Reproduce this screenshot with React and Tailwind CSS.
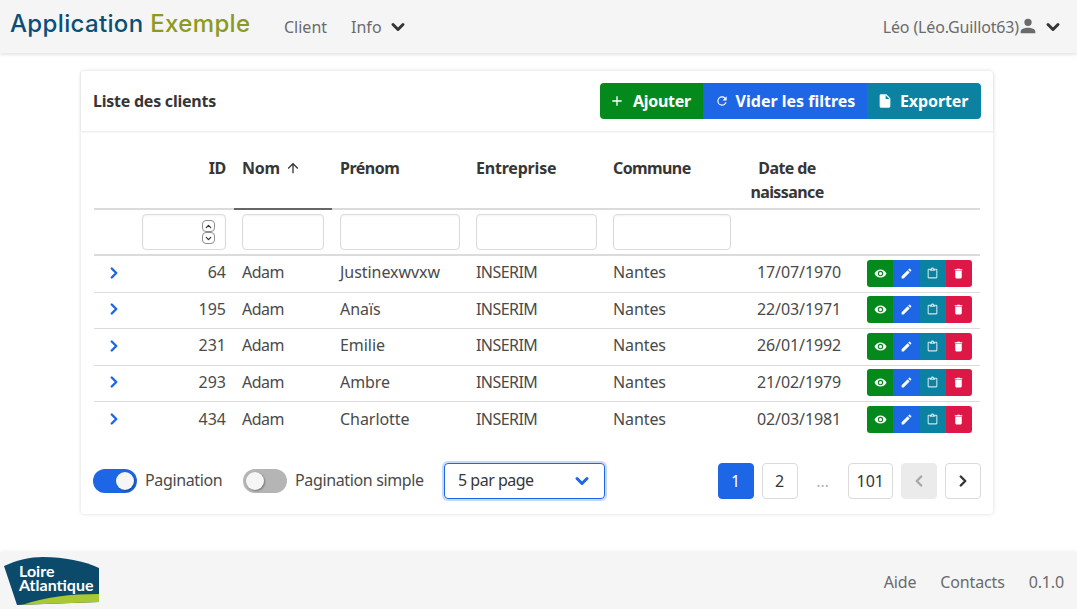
import React from 'react'

const P = {
  eye: 'M12,9A3,3 0 0,0 9,12A3,3 0 0,0 12,15A3,3 0 0,0 15,12A3,3 0 0,0 12,9M12,17A5,5 0 0,1 7,12A5,5 0 0,1 12,7A5,5 0 0,1 17,12A5,5 0 0,1 12,17M12,4.5C7,4.5 2.73,7.61 1,12C2.73,16.39 7,19.5 12,19.5C17,19.5 21.27,16.39 23,12C21.27,7.61 17,4.5 12,4.5Z',
  pencil: 'M20.71,7.04C21.1,6.65 21.1,6 20.71,5.63L18.37,3.29C18,2.9 17.35,2.9 16.96,3.29L15.12,5.12L18.87,8.87M3,17.25V21H6.75L17.81,9.93L14.06,6.18L3,17.25Z',
  clipboard: 'M19,3H14.82C14.4,1.84 13.3,1 12,1C10.7,1 9.6,1.84 9.18,3H5A2,2 0 0,0 3,5V19A2,2 0 0,0 5,21H19A2,2 0 0,0 21,19V5A2,2 0 0,0 19,3M12,3A1,1 0 0,1 13,4A1,1 0 0,1 12,5A1,1 0 0,1 11,4A1,1 0 0,1 12,3M7,7H17V5H19V19H5V5H7V7Z',
  trash: 'M19,4H15.5L14.5,3H9.5L8.5,4H5V6H19M6,19A2,2 0 0,0 8,21H16A2,2 0 0,0 18,19V7H6V19Z',
  file: 'M13,9V3.5L18.5,9M6,2C4.89,2 4,2.89 4,4V20A2,2 0 0,0 6,22H18A2,2 0 0,0 20,20V8L14,2H6Z',
  refresh: 'M17.65,6.35C16.2,4.9 14.21,4 12,4A8,8 0 0,0 4,12A8,8 0 0,0 12,20C15.73,20 18.84,17.45 19.73,14H17.65C16.83,16.33 14.61,18 12,18A6,6 0 0,1 6,12A6,6 0 0,1 12,6C13.66,6 15.14,6.69 16.22,7.78L13,11H20V4L17.65,6.35Z',
  account: 'M12,4A4,4 0 0,1 16,8A4,4 0 0,1 12,12A4,4 0 0,1 8,8A4,4 0 0,1 12,4M12,14C16.42,14 20,15.79 20,18V20H4V18C4,15.79 7.58,14 12,14Z',
  plus: 'M19,13H13V19H11V13H5V11H11V5H13V11H19V13Z',
  arrowUp: 'M13,20H11V8L5.5,13.5L4.08,12.08L12,4.16L19.92,12.08L18.5,13.5L13,8V20Z',
}

function Icon({ d, className }) {
  return (
    <svg viewBox="0 0 24 24" className={className} fill="currentColor">
      <path d={d} />
    </svg>
  )
}

function Chevron({ dir = 'down', className, width = 3.2 }) {
  const points = {
    down: '6,9 12,15 18,9',
    up: '6,15 12,9 18,15',
    right: '9,6 15,12 9,18',
    left: '15,6 9,12 15,18',
  }[dir]
  return (
    <svg viewBox="0 0 24 24" className={className} fill="none" stroke="currentColor" strokeWidth={width} strokeLinecap="round" strokeLinejoin="round">
      <polyline points={points} />
    </svg>
  )
}

const clients = [
  { id: 64, nom: 'Adam', prenom: 'Justinexwvxw', date: '17/07/1970' },
  { id: 195, nom: 'Adam', prenom: 'Anaïs', date: '22/03/1971' },
  { id: 231, nom: 'Adam', prenom: 'Emilie', date: '26/01/1992' },
  { id: 293, nom: 'Adam', prenom: 'Ambre', date: '21/02/1979' },
  { id: 434, nom: 'Adam', prenom: 'Charlotte', date: '02/03/1981' },
]

function ActionButtons() {
  const btn = 'w-[26.25px] h-[27px] flex items-center justify-center text-white'
  return (
    <div className="flex -mt-px">
      <span className={`${btn} bg-[#048a1c] rounded-l-[3px]`}><Icon d={P.eye} className="w-[13px] h-[13px]" /></span>
      <span className={`${btn} bg-[#1d66e5]`}><Icon d={P.pencil} className="w-[13px] h-[13px]" /></span>
      <span className={`${btn} bg-[#0b82a1]`}><Icon d={P.clipboard} className="w-[13px] h-[13px] opacity-80" /></span>
      <span className={`${btn} bg-[#de1846] rounded-r-[3px]`}><Icon d={P.trash} className="w-[13px] h-[13px]" /></span>
    </div>
  )
}

function Toggle({ on, label, labelClass }) {
  return (
    <div className="flex items-center gap-2">
      <span className={`w-11 h-6 rounded-full flex items-center px-[3px] ${on ? 'bg-[#1d66e5] justify-end' : 'bg-[#b5b5b5] justify-start'}`}>
        <span className="w-[18px] h-[18px] rounded-full bg-[#f5f5f5] shadow-[1px_1px_2px_rgba(0,0,0,0.35)]" />
      </span>
      <span className={`text-[#4a4a4a] whitespace-nowrap -mt-[2px] tracking-[-0.36px] ${labelClass}`}>{label}</span>
    </div>
  )
}

function PageBtn({ children, active, disabled }) {
  let cls = 'bg-white border-[#dbdbdb] text-[#363636]'
  if (active) cls = 'bg-[#1d66e5] border-[#1d66e5] text-white'
  if (disabled) cls = 'bg-[#ebebeb] border-[#ebebeb] text-[#a8a8a8]'
  return (
    <span className={`h-9 min-w-9 px-2 flex items-center justify-center border rounded-[4px] ${cls}`}>{children}</span>
  )
}

const filterInput = 'block h-9 border border-[#dbdbdb] rounded-[4px] bg-white shadow-[inset_0_1px_2px_rgba(10,10,10,0.05)]'
const cell = 'pb-[3px]'

export default function App() {
  return (
    <div className="h-[609px] flex flex-col bg-white text-[16px] leading-6 text-[#4a4a4a] font-['Noto_Sans','Open_Sans',sans-serif] overflow-hidden">
      <nav className="h-[53px] shrink-0 bg-[#f5f5f5] shadow-[0_2px_3px_rgba(10,10,10,0.1)] flex items-center pl-[10px] pr-[16px] relative">
        <span className="text-[24px] tracking-[0.35px] leading-none font-['Inter',sans-serif] font-medium -mt-[5px] w-[274px] shrink-0">
          <span className="text-[#0b4f78]">Application</span>{' '}
          <span className="text-[#8c9a20]">Exemple</span>
        </span>
        <span className="text-[#6b6b6b]">Client</span>
        <span className="text-[#6b6b6b] ml-6">Info</span>
        <Chevron width={3.6} className="w-[20px] h-[20px] ml-[6px] text-[#363636]" />
        <span className="ml-auto text-[#6b6b6b] tracking-[-0.15px] -mr-[2px]">Léo (Léo.Guillot63)</span>
        <Icon d={P.account} className="w-[22px] h-[22px] text-[#6b6b6b] -mt-[2px]" />
        <Chevron width={3.6} className="w-[20px] h-[20px] ml-[4px] -mr-[2px] text-[#363636]" />
      </nav>

      <main className="flex-1 pt-[18px] px-[81px]">
        <section className="w-[912px] h-[443px] bg-white rounded-[4px] shadow-[0_0_4px_rgba(10,10,10,0.14)]">
          <header className="h-[60px] flex items-center justify-between pl-3 pr-3 shadow-[0_1px_2px_rgba(10,10,10,0.1)]">
            <h1 className="font-bold text-[#363636] tracking-[-0.24px]">Liste des clients</h1>
            <div className="flex h-9 font-bold text-white">
              <span className="w-[103px] flex items-center pl-[9px] gap-2 bg-[#048a1c] rounded-l-[4px] tracking-[-0.3px]">
                <Icon d={P.plus} className="w-4 h-4" />Ajouter
              </span>
              <span className="w-[164px] flex items-center justify-center gap-[7px] bg-[#1d66e5]">
                <Icon d={P.refresh} className="w-[14px] h-[14px]" />Vider les filtres
              </span>
              <span className="w-[114px] flex items-center pl-[10px] gap-[7px] bg-[#0b82a1] rounded-r-[4px] tracking-[-0.1px]">
                <Icon d={P.file} className="w-4 h-4" />Exporter
              </span>
            </div>
          </header>

          <div className="px-[13px]">
            <table className="w-[886px] table-fixed border-collapse">
              <colgroup>
                <col className="w-[40px]" />
                <col className="w-[100px]" />
                <col className="w-[98px]" />
                <col className="w-[136px]" />
                <col className="w-[137px]" />
                <col className="w-[134px]" />
                <col className="w-[120px]" />
                <col className="w-[121px]" />
              </colgroup>
              <thead>
                <tr className="h-[78px] border-b-2 border-[#dbdbdb] text-[#363636] font-bold align-top tracking-[-0.3px]">
                  <th />
                  <th className="pt-[25px] pr-2 text-right">ID</th>
                  <th className="pt-[25px] px-2 text-left border-b-2 border-[#666]">
                    <span className="inline-flex items-center gap-[5px]">Nom <Icon d={P.arrowUp} className="w-4 h-4" /></span>
                  </th>
                  <th className="pt-[25px] px-2 text-left tracking-[-0.5px]">Prénom</th>
                  <th className="pt-[25px] px-2 text-left tracking-[-0.2px]">Entreprise</th>
                  <th className="pt-[25px] px-2 text-left tracking-[-0.6px]">Commune</th>
                  <th className="pt-[25px] pr-[24px] pl-0 text-center tracking-[-0.6px]">Date de naissance</th>
                  <th />
                </tr>
                <tr className="h-[46px] border-b-2 border-[#dbdbdb]">
                  <td />
                  <td className="pl-2 pr-2">
                    <div className={`${filterInput} w-[84px] flex flex-col items-end justify-center pr-[10px]`}>
                      <span className="w-[13px] h-[12px] border border-[#8f8f8f] rounded-[4px] flex items-center justify-center text-[#333]"><Chevron dir="up" className="w-[9px] h-[9px]" /></span>
                      <span className="w-[13px] h-[12px] border border-[#8f8f8f] rounded-[4px] flex items-center justify-center text-[#333]"><Chevron className="w-[9px] h-[9px]" /></span>
                    </div>
                  </td>
                  <td className="px-2"><div className={`${filterInput} w-[82px]`} /></td>
                  <td className="px-2"><div className={`${filterInput} w-[120px]`} /></td>
                  <td className="px-2"><div className={`${filterInput} w-[121px]`} /></td>
                  <td className="px-2"><div className={`${filterInput} w-[118px]`} /></td>
                  <td />
                  <td />
                </tr>
              </thead>
              <tbody>
                {clients.map((c, i) => (
                  <tr key={c.id} className={`${i === 0 ? 'h-[37px]' : 'h-[36.5px]'} ${i < clients.length - 1 ? 'border-b border-[#dbdbdb]' : ''}`}>
                    <td className="pl-[11px] pb-[2px]"><Chevron dir="right" className="w-[18px] h-[18px] text-[#1d66e5]" /></td>
                    <td className={`${cell} pr-2 text-right`}>{c.id}</td>
                    <td className={`${cell} px-2 tracking-[-0.5px]`}>{c.nom}</td>
                    <td className={`${cell} px-2 tracking-[-0.05px]`}>{c.prenom}</td>
                    <td className={`${cell} px-2 tracking-[-0.55px]`}>INSERIM</td>
                    <td className={`${cell} px-2 tracking-[-0.1px]`}>Nantes</td>
                    <td className={`${cell} pl-[18px] tracking-[-0.1px]`}>{c.date}</td>
                    <td className="pl-2"><ActionButtons /></td>
                  </tr>
                ))}
              </tbody>
            </table>

            <div className="mt-[24.5px] -ml-px -mr-px flex items-center">
              <Toggle on label="Pagination" labelClass="w-[78px]" />
              <div className="ml-5"><Toggle label="Pagination simple" labelClass="w-[129px]" /></div>
              <div className="ml-5 w-[161px] h-9 border border-[#1d66e5] rounded-[4px] shadow-[0_0_0_2px_rgba(29,102,229,0.25)] flex items-center justify-between pl-[13px] pr-[12px] text-[#363636]">
                <span className="-mt-[2px] tracking-[-0.5px]">5 par page</span>
                <Chevron width={3.6} className="w-[20px] h-[20px] text-[#1d66e5]" />
              </div>
              <div className="ml-auto flex items-center gap-2">
                <PageBtn active>1</PageBtn>
                <PageBtn>2</PageBtn>
                <span className="w-[30px] mx-[2px] text-center text-[#b5b5b5]">…</span>
                <PageBtn>101</PageBtn>
                <PageBtn disabled><Chevron dir="left" className="w-[18px] h-[18px]" /></PageBtn>
                <PageBtn><Chevron dir="right" className="w-[18px] h-[18px]" /></PageBtn>
              </div>
            </div>
          </div>
        </section>
      </main>

      <footer className="h-[57px] shrink-0 bg-[#f5f5f5] shadow-[0_-1px_3px_rgba(10,10,10,0.06)] flex items-center pl-1 pr-[13px]">
        <svg viewBox="0 0 96 50" className="w-[96px] h-[50px] mt-[1px]">
          <path d="M0,10 C13,4 26,1 39,1 C60,1 80,5 95,12 L95,46 L13,49 Z" fill="#0b4a6b" />
          <path d="M18,49 C40,41 68,38 95,38 L95,46 L13,49 Z" fill="#a9c832" />
          <text x="15" y="21" fill="#fff" fontSize="16" fontFamily="Lato, sans-serif" fontWeight="700">Loire</text>
          <text x="15" y="35" fill="#fff" fontSize="16" fontFamily="Lato, sans-serif" fontWeight="700">Atlantique</text>
        </svg>
        <div className="ml-auto flex items-center text-[#6b6b6b] gap-6 tracking-[-0.15px] pt-[2px]">
          <span>Aide</span>
          <span>Contacts</span>
          <span>0.1.0</span>
        </div>
      </footer>
    </div>
  )
}
